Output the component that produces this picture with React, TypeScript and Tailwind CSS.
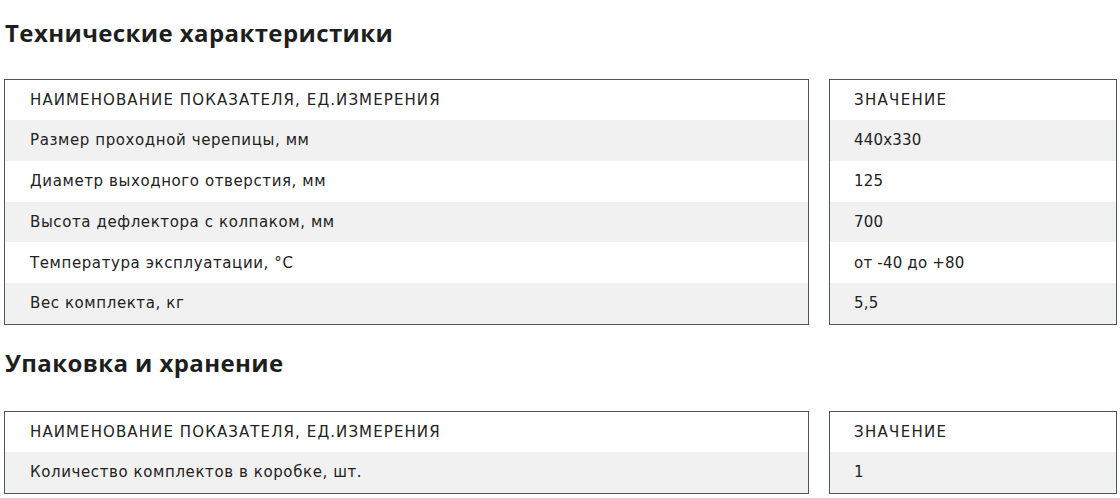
import React from "react";

const bodyFont = { fontFamily: '"DejaVu Sans", "Open Sans", sans-serif' };
const titleFont = { fontFamily: '"Open Sans", "DejaVu Sans", sans-serif' };

function Table({ rows }: { rows: [string, string][] }) {
  return (
    <div className="flex gap-[20px] pl-[4px] pr-[3px]" style={bodyFont}>
      <div className="flex-1 border border-[#4f545a]">
        <div className="h-[40px] flex items-center pl-[25px] text-[15px] tracking-[1.1px] text-[#222]">
          НАИМЕНОВАНИЕ ПОКАЗАТЕЛЯ, ЕД.ИЗМЕРЕНИЯ
        </div>
        {rows.map(([k], i) => (
          <div
            key={i}
            className={`h-[40.8px] flex items-center pl-[25px] text-[15px] tracking-[0.6px] text-[#222] ${
              i % 2 === 0 ? "bg-[#f1f1f1]" : "bg-white"
            }`}
          >
            {k}
          </div>
        ))}
      </div>
      <div className="w-[288px] border border-[#4f545a]">
        <div className="h-[40px] flex items-center pl-[24px] text-[15px] tracking-[1.3px] text-[#222]">
          ЗНАЧЕНИЕ
        </div>
        {rows.map(([, v], i) => (
          <div
            key={i}
            className={`h-[40.8px] flex items-center pl-[24px] text-[15px] tracking-[0.2px] text-[#222] ${
              i % 2 === 0 ? "bg-[#f1f1f1]" : "bg-white"
            }`}
          >
            {v}
          </div>
        ))}
      </div>
    </div>
  );
}

export default function App() {
  return (
    <div className="w-[1120px] h-[498px] bg-white overflow-hidden">
      <h2
        className="pl-[5px] pt-[15px] text-[24px] font-bold leading-[36px] tracking-[0.4px] text-[#1e1e1e]"
        style={titleFont}
      >
        Технические характеристики
      </h2>
      <div className="mt-[28px]">
        <Table
          rows={[
            ["Размер проходной черепицы, мм", "440x330"],
            ["Диаметр выходного отверстия, мм", "125"],
            ["Высота дефлектора с колпаком, мм", "700"],
            ["Температура эксплуатации, °С", "от -40 до +80"],
            ["Вес комплекта, кг", "5,5"],
          ]}
        />
      </div>
      <h2
        className="pl-[5px] pt-[20px] text-[24px] font-bold leading-[36px] tracking-[0.4px] text-[#1e1e1e]"
        style={titleFont}
      >
        Упаковка и хранение
      </h2>
      <div className="mt-[30px]">
        <Table rows={[["Количество комплектов в коробке, шт.", "1"]]} />
      </div>
    </div>
  );
}
